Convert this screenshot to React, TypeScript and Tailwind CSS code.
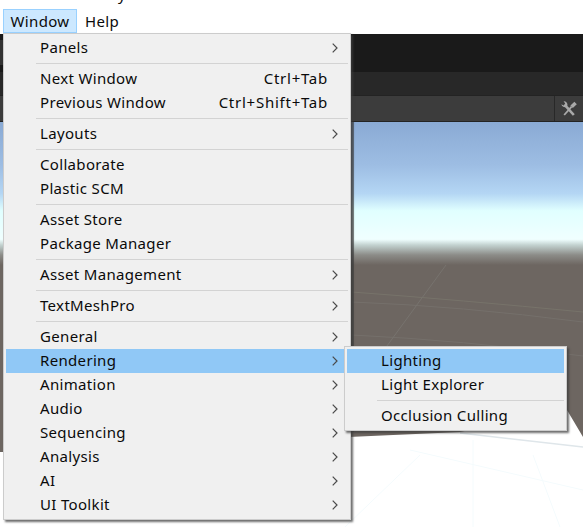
import React from "react";

type Entry = { label?: string; shortcut?: string; sub?: boolean; active?: boolean; sep?: boolean };

const items: Entry[] = [
  { label: "Panels", sub: true },
  { sep: true },
  { label: "Next Window", shortcut: "Ctrl+Tab" },
  { label: "Previous Window", shortcut: "Ctrl+Shift+Tab" },
  { sep: true },
  { label: "Layouts", sub: true },
  { sep: true },
  { label: "Collaborate" },
  { label: "Plastic SCM" },
  { sep: true },
  { label: "Asset Store" },
  { label: "Package Manager" },
  { sep: true },
  { label: "Asset Management", sub: true },
  { sep: true },
  { label: "TextMeshPro", sub: true },
  { sep: true },
  { label: "General", sub: true },
  { label: "Rendering", sub: true, active: true },
  { label: "Animation", sub: true },
  { label: "Audio", sub: true },
  { label: "Sequencing", sub: true },
  { label: "Analysis", sub: true },
  { label: "AI", sub: true },
  { label: "UI Toolkit", sub: true },
];

const subItems: Entry[] = [
  { label: "Lighting", active: true },
  { label: "Light Explorer" },
  { sep: true },
  { label: "Occlusion Culling" },
];

function Chevron() {
  return (
    <svg width="6" height="10" viewBox="0 0 6 10" className="shrink-0">
      <path d="M0.7 0.7 L5 5 L0.7 9.3" fill="none" stroke="#4a4a4a" strokeWidth="1.2" />
    </svg>
  );
}

function Row({ item }: { item: Entry }) {
  if (item.sep) {
    return (
      <div className="h-[7px] pt-[3px]">
        <div className="ml-[30px] h-px bg-[#d3d3d3]" />
      </div>
    );
  }
  return (
    <div className={`flex h-6 items-center whitespace-nowrap ${item.active ? "bg-[#90c8f6]" : ""}`}>
      <span className="flex-1 pb-[2px] pl-[34px]">{item.label}</span>
      {item.shortcut && <span className="pb-[2px] pr-[20px] tracking-[0.75px]">{item.shortcut}</span>}
      {item.sub && (
        <span className="flex w-[16px] justify-start">
          <Chevron />
        </span>
      )}
    </div>
  );
}

export default function App() {
  return (
    <div
      className="relative h-[527px] w-[583px] overflow-hidden bg-white text-[15px] tracking-[0.33px] text-[#0a0a0a]"
      style={{ fontFamily: '"Noto Sans", sans-serif' }}
    >
      <span className="absolute left-[118px] top-[-17px]">y</span>

      {/* Menu bar */}
      <div className="flex h-[34px] items-end bg-white pb-px pl-[3px]">
        <div className="flex h-[24px] w-[74px] items-center justify-center border border-[#99d1ff] bg-[#cce8ff]">
          Window
        </div>
        <div className="flex h-[24px] items-center pl-2">Help</div>
      </div>

      {/* Editor backdrop */}
      <div className="flex h-[38px] bg-[#1a1a1a]">
        <div className="mt-[6px] h-[25px] w-[3px] bg-[#333333]" />
      </div>
      <div className="h-[23px] bg-[#282828]" />
      <div className="flex h-[27px] justify-end border-y border-[#232323] bg-[#3c3c3c]">
        <div className="flex w-[29px] items-center justify-center border-l border-[#282828]">
          <svg width="18" height="18" viewBox="0 0 18 18" fill="none">
            <path d="M5.2 5.4 L13.8 15" stroke="#a9a9a9" strokeWidth="2.6" />
            <path d="M1.4 4.2 A3.6 3.6 0 0 0 6.4 7 L7.4 5.6 A3.6 3.6 0 0 0 3.6 1.2 L5.2 3.4 L3.6 5.4 Z" fill="#a9a9a9" />
            <path d="M4.2 15 L11.6 6.6" stroke="#a9a9a9" strokeWidth="1.8" />
            <path d="M10.4 5.4 L14.4 1.8 L16.8 4.2 L12.8 8 Z" fill="#a9a9a9" />
          </svg>
        </div>
      </div>

      {/* Scene view */}
      <div className="relative h-[405px]">
        <svg width="583" height="405" viewBox="0 122 583 405" className="block">
          <defs>
            <linearGradient id="sky" x1="0" y1="122" x2="0" y2="265" gradientUnits="userSpaceOnUse">
              <stop offset="0" stopColor="#8aaad4" />
              <stop offset="0.3" stopColor="#9dbde3" />
              <stop offset="0.5" stopColor="#b4d6f4" />
              <stop offset="0.62" stopColor="#e0ffff" />
              <stop offset="0.82" stopColor="#f0ffff" />
              <stop offset="0.86" stopColor="#c3d2d0" />
              <stop offset="0.93" stopColor="#8c8c88" />
              <stop offset="1" stopColor="#6d6661" />
            </linearGradient>
          </defs>
          <rect x="0" y="122" width="583" height="405" fill="#ffffff" />
          <rect x="0" y="122" width="583" height="143" fill="url(#sky)" />
          <path d="M0 265 H583 V437 L567 410 L460 432 L10 452 L0 452 Z" fill="#6d6661" />
          <path d="M352 292 Q460 300 583 312" stroke="#77736a" strokeWidth="1" fill="none" />
          <path d="M352 302 Q460 306 583 322" stroke="#75706b" strokeWidth="1" fill="none" />
          <path d="M352 335 Q460 340 583 356" stroke="#75706b" strokeWidth="1" fill="none" />
          <path d="M446 265 L384 350" stroke="#77736e" strokeWidth="1" fill="none" />
          <path d="M460 433 L583 447" stroke="#dfe6ea" strokeWidth="1.5" fill="none" />
          <path d="M345 527 L420 455 M410 450 L583 490 M473 440 L473 527 M533 455 L560 527" stroke="#f4fbfd" strokeWidth="1" fill="none" />
          <rect x="351" y="122" width="3" height="310" fill="#3a3a3a" opacity="0.55" />
        </svg>
      </div>

      {/* Window menu */}
      <div className="absolute left-[3px] top-[33px] w-[348px] border border-[#cccccc] bg-[#f0f0f0] p-[2px] shadow-[2px_2px_2px_rgba(60,60,60,0.75)]">
        {items.map((item, i) => (
          <Row key={i} item={item} />
        ))}
      </div>

      {/* Rendering submenu */}
      <div className="absolute left-[344px] top-[346px] w-[223px] border border-[#cccccc] bg-[#f0f0f0] p-[2px] shadow-[2px_2px_2px_rgba(60,60,60,0.75)]">
        {subItems.map((item, i) => (
          <Row key={i} item={item} />
        ))}
      </div>
    </div>
  );
}
